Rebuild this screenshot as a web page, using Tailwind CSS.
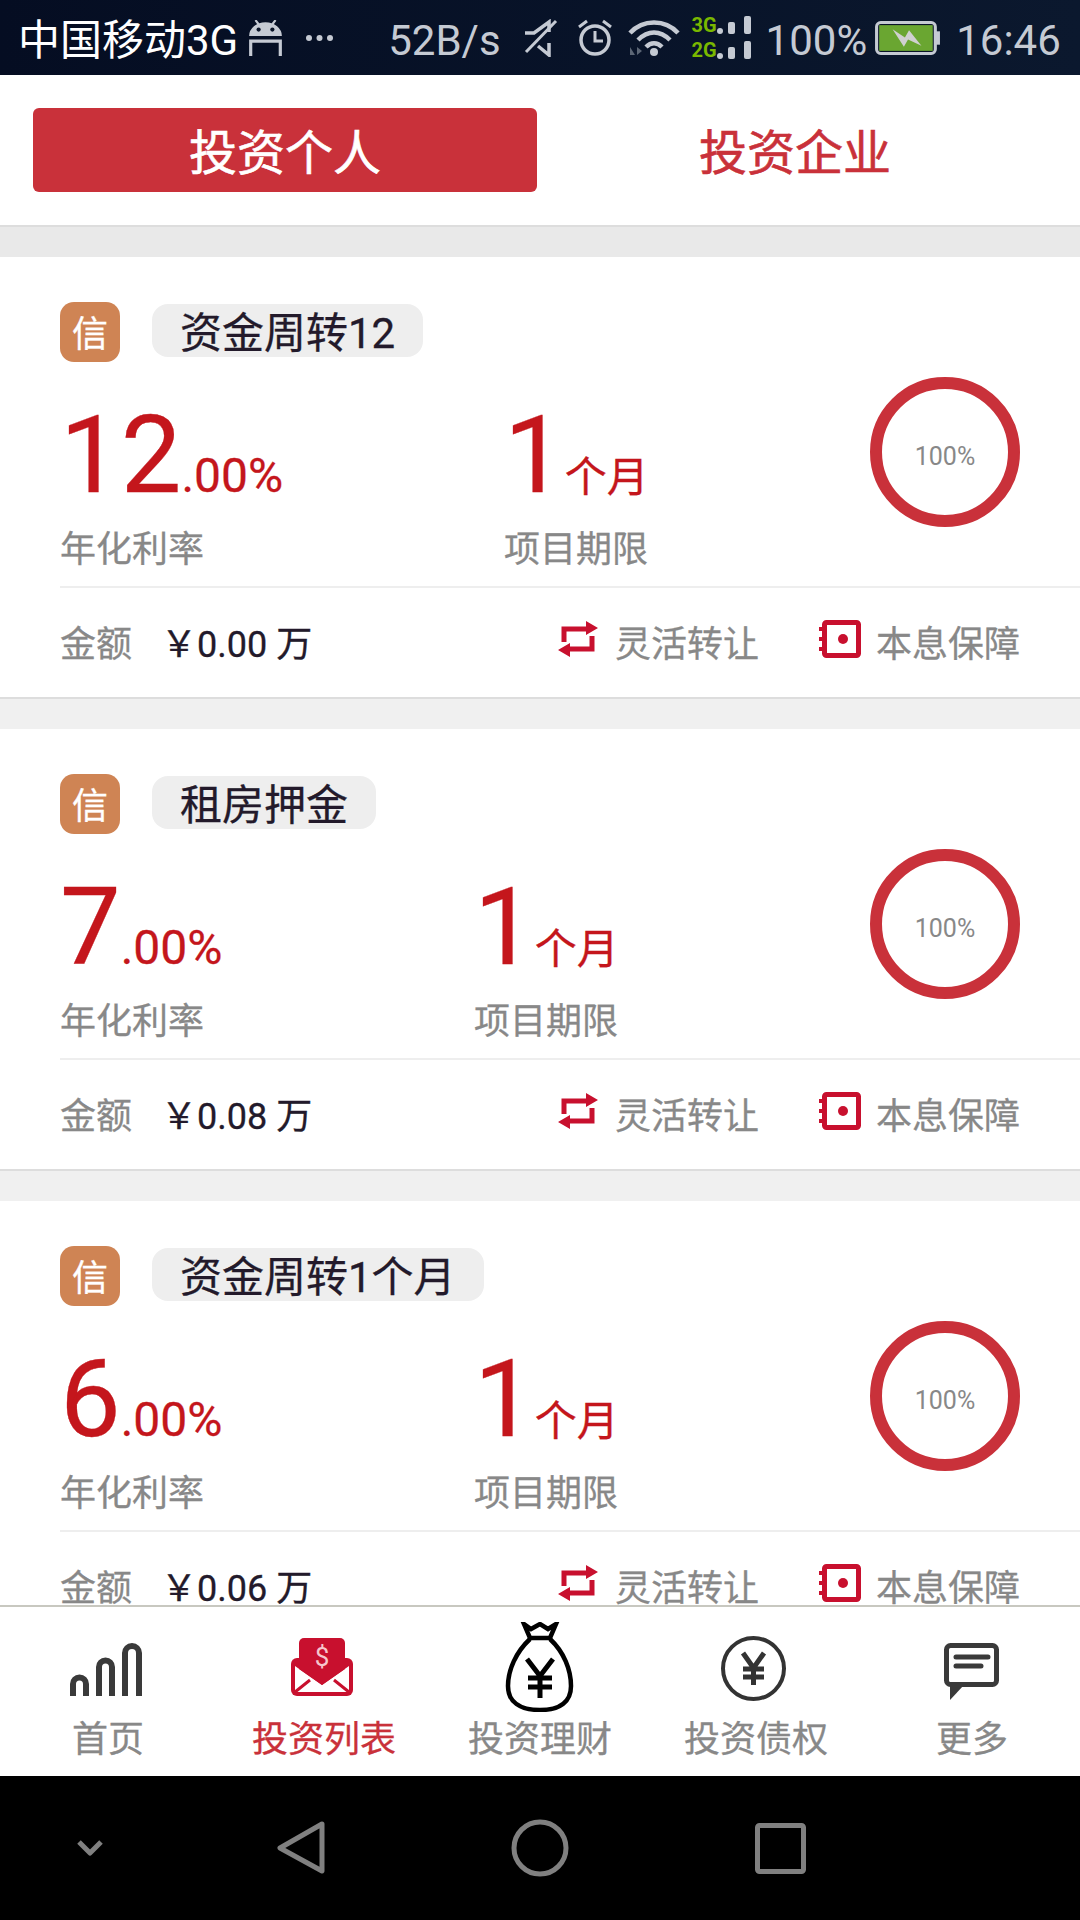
<!DOCTYPE html>
<html lang="zh-CN">
<head>
  <meta charset="UTF-8">
  <meta name="viewport" content="width=device-width, initial-scale=1.0">
  <title>投资列表</title>
  <script src="https://cdn.jsdelivr.net/npm/@tailwindcss/browser@4"></script>
</head>
<body class="bg-white font-['Roboto','Noto_Sans_CJK_SC',sans-serif]">
  <!-- shared card icons -->
  <svg class="hidden">
    <symbol id="icon-transfer" viewBox="0 0 40 38">
      <path d="M6 22V9H30M34 16V29H10" fill="none" stroke="#c8102e" stroke-width="5"/>
      <path d="M28 1L40 8L28 15ZM12 23L0 30L12 37Z" fill="#c8102e"/>
    </symbol>
    <symbol id="icon-safe" viewBox="0 0 42 38">
      <rect x="5.500" y="2.500" width="34" height="33" rx="2" fill="none" stroke="#c8102e" stroke-width="5"/>
      <circle cx="24" cy="19" r="5" fill="#c8102e"/>
      <path d="M0 9H8M0 19H8M0 29H8" stroke="#c8102e" stroke-width="4"/>
    </symbol>
  </svg>

  <div class="w-[1080px] h-[1920px] flex flex-col overflow-hidden">
    <!-- Status bar -->
    <div class="h-[75px] shrink-0 flex items-center pl-[18px] text-[42px] text-[#c5cad3] bg-linear-to-r from-[#050d22] to-[#0b182e]">
      <span class="text-white pt-[5px]">中国移动3G</span>
      <svg class="ml-[9px]" width="37" height="36" viewBox="0 0 35 34"><path d="M2 15a15.500 13 0 0 1 31 0Z" fill="#c5cad3"/><circle cx="11" cy="9" r="2" fill="#0a1428"/><circle cx="24" cy="9" r="2" fill="#0a1428"/><path d="M8 0l3 4M27 0l-3 4" stroke="#c5cad3" stroke-width="2"/><path d="M3.500 34V20H31.500V34" fill="none" stroke="#c5cad3" stroke-width="3"/></svg>
      <svg class="ml-[21px]" width="29" height="8" viewBox="0 0 29 8"><circle cx="4" cy="4" r="3" fill="#c5cad3"/><circle cx="14.500" cy="4" r="3" fill="#c5cad3"/><circle cx="25" cy="4" r="3" fill="#c5cad3"/></svg>
      <span class="ml-[54px] pt-[5px]">52B/s</span>
      <svg class="ml-[22px]" width="35" height="38" viewBox="0 0 35 38"><path d="M33 2L3 33" stroke="#c5cad3" stroke-width="3"/><path d="M2 14H11L26 3V13M26 24V36L15 27" fill="none" stroke="#c5cad3" stroke-width="3.500"/></svg>
      <svg class="ml-[20px]" width="34" height="38" viewBox="0 0 34 38"><circle cx="17" cy="21" r="14" fill="none" stroke="#c5cad3" stroke-width="3.500"/><path d="M17 12V22H25" fill="none" stroke="#c5cad3" stroke-width="3"/><path d="M1 8L9 2M33 8L25 2" stroke="#c5cad3" stroke-width="3"/></svg>
      <svg class="ml-[16px]" width="52" height="38" viewBox="0 0 52 38"><path d="M3 13C16 -1 38 -1 51 13M11 20C21 10 33 10 43 20M19 27C24 22 30 22 35 27" fill="none" stroke="#c5cad3" stroke-width="4.500" transform="translate(-1 1)"/><circle cx="26" cy="33" r="4" fill="#c5cad3"/><path d="M2 36V28L7 36ZM9 28V36L14 32Z" fill="#5c6675"/></svg>
      <div class="ml-[12px] w-[59px] h-[50px] flex flex-col text-[20px] leading-[25px] font-bold text-[#7ab800]">
        <div class="flex items-center justify-between">
          <span>3G</span>
          <svg class="shrink-0" width="35" height="20" viewBox="0 0 35 20"><circle cx="3" cy="16" r="3" fill="#c5cad3"/><rect x="11" y="7" width="7" height="12" rx="2" fill="#c5cad3"/><rect x="27" y="1" width="7" height="18" rx="2" fill="#c5cad3"/></svg>
        </div>
        <div class="flex items-center justify-between">
          <span>2G</span>
          <svg class="shrink-0" width="35" height="20" viewBox="0 0 35 20"><circle cx="3" cy="16" r="3" fill="#c5cad3"/><rect x="11" y="7" width="7" height="12" rx="2" fill="#c5cad3"/><rect x="27" y="1" width="7" height="18" rx="2" fill="#c5cad3"/></svg>
        </div>
      </div>
      <span class="ml-[15px] pt-[5px]">100%</span>
      <svg class="ml-[8px]" width="65" height="34" viewBox="0 0 63 33"><rect x="1.500" y="1.500" width="57" height="30" rx="4" fill="#0a1428" stroke="#c5cad3" stroke-width="3"/><rect x="4" y="4" width="52" height="25" fill="#6aa631"/><path d="M59 10h4v13h-4Z" fill="#c5cad3"/><path d="M17 8L29 16L33 9L45 24L32 18L28 25Z" fill="#d0d0d0"/></svg>
      <span class="ml-[16px] pt-[5px]">16:46</span>
    </div>

    <!-- Tabs -->
    <div class="h-[152px] shrink-0 flex bg-white border-b-2 border-[#dddddd] pl-[33px] pr-[27px] pt-[33px] text-[48px] [-webkit-text-stroke:0.6px]">
      <div class="w-[504px] h-[84px] flex items-center justify-center pt-[7px] rounded-[6px] bg-[#c9313a] text-white">投资个人</div>
      <div class="flex-1 h-[84px] flex items-center justify-center pt-[7px] text-[#c9313a]">投资企业</div>
    </div>

    <!-- Product list -->
    <div class="flex-1 min-h-0 overflow-hidden flex flex-col bg-[#f0f0f0] [-webkit-text-stroke:0.3px]">
      <div class="h-[30px] shrink-0 bg-[#e9e9e9]"></div>

      <!-- Card 1 -->
      <div class="shrink-0 h-[442px] mb-[30px] bg-white border-b-2 border-[#dddddd] pl-[60px] pt-[45px]">
        <div class="h-[60px] flex items-start">
          <div class="w-[60px] h-[60px] rounded-[14px] bg-[#cf8454] flex items-center justify-center pt-[6px] text-white text-[36px]">信</div>
          <div class="ml-[32px] mt-[2px] h-[53px] px-[28px] rounded-[16px] bg-[#eeeeee] flex items-center pt-[6px] text-[42px] text-[#231a2b]">资金周转12</div>
        </div>
        <div class="h-[224px] flex">
          <div class="w-[444px] pt-[39px]">
            <div class="flex items-baseline h-[108px] text-[#c4161c] leading-[108px]"><span class="text-[108px]">12</span><span class="text-[48px]">.00%</span></div>
            <div class="mt-[23px] text-[36px] leading-[36px] text-[#888888]">年化利率</div>
          </div>
          <div class="pt-[39px]">
            <div class="flex items-baseline h-[108px] text-[#c4161c] leading-[108px]"><span class="text-[108px]">1</span><span class="text-[42px]">个月</span></div>
            <div class="mt-[23px] text-[36px] leading-[36px] text-[#888888]">项目期限</div>
          </div>
          <div class="ml-auto mr-[60px] mt-[15px] w-[150px] h-[150px] rounded-full border-[12px] border-[#c9313a] flex items-center justify-center pt-[10px] text-[25px] text-[#888888] [-webkit-text-stroke:0px]">100%</div>
        </div>
        <div class="h-[111px] border-t-2 border-[#eeeeee] pr-[60px] pt-[4px] flex items-center text-[36px]">
          <span class="text-[#888888]">金额</span>
          <span class="ml-[29px] text-[#231a2b]">￥0.00 万</span>
          <svg class="ml-auto -mt-[12px]" width="40" height="38"><use href="#icon-transfer"/></svg>
          <span class="ml-[17px] text-[#888888]">灵活转让</span>
          <svg class="ml-[60px] -mt-[12px]" width="42" height="38"><use href="#icon-safe"/></svg>
          <span class="ml-[15px] text-[#888888]">本息保障</span>
        </div>
      </div>

      <!-- Card 2 -->
      <div class="shrink-0 h-[442px] mb-[30px] bg-white border-b-2 border-[#dddddd] pl-[60px] pt-[45px]">
        <div class="h-[60px] flex items-start">
          <div class="w-[60px] h-[60px] rounded-[14px] bg-[#cf8454] flex items-center justify-center pt-[6px] text-white text-[36px]">信</div>
          <div class="ml-[32px] mt-[2px] h-[53px] px-[28px] rounded-[16px] bg-[#eeeeee] flex items-center pt-[6px] text-[42px] text-[#231a2b]">租房押金</div>
        </div>
        <div class="h-[224px] flex">
          <div class="w-[414px] pt-[39px]">
            <div class="flex items-baseline h-[108px] text-[#c4161c] leading-[108px]"><span class="text-[108px]">7</span><span class="text-[48px]">.00%</span></div>
            <div class="mt-[23px] text-[36px] leading-[36px] text-[#888888]">年化利率</div>
          </div>
          <div class="pt-[39px]">
            <div class="flex items-baseline h-[108px] text-[#c4161c] leading-[108px]"><span class="text-[108px]">1</span><span class="text-[42px]">个月</span></div>
            <div class="mt-[23px] text-[36px] leading-[36px] text-[#888888]">项目期限</div>
          </div>
          <div class="ml-auto mr-[60px] mt-[15px] w-[150px] h-[150px] rounded-full border-[12px] border-[#c9313a] flex items-center justify-center pt-[10px] text-[25px] text-[#888888] [-webkit-text-stroke:0px]">100%</div>
        </div>
        <div class="h-[111px] border-t-2 border-[#eeeeee] pr-[60px] pt-[4px] flex items-center text-[36px]">
          <span class="text-[#888888]">金额</span>
          <span class="ml-[29px] text-[#231a2b]">￥0.08 万</span>
          <svg class="ml-auto -mt-[12px]" width="40" height="38"><use href="#icon-transfer"/></svg>
          <span class="ml-[17px] text-[#888888]">灵活转让</span>
          <svg class="ml-[60px] -mt-[12px]" width="42" height="38"><use href="#icon-safe"/></svg>
          <span class="ml-[15px] text-[#888888]">本息保障</span>
        </div>
      </div>

      <!-- Card 3, cut off by the bottom nav -->
      <div class="shrink-0 h-[442px] bg-white border-b-2 border-[#dddddd] pl-[60px] pt-[45px]">
        <div class="h-[60px] flex items-start">
          <div class="w-[60px] h-[60px] rounded-[14px] bg-[#cf8454] flex items-center justify-center pt-[6px] text-white text-[36px]">信</div>
          <div class="ml-[32px] mt-[2px] h-[53px] px-[28px] rounded-[16px] bg-[#eeeeee] flex items-center pt-[6px] text-[42px] text-[#231a2b]">资金周转1个月</div>
        </div>
        <div class="h-[224px] flex">
          <div class="w-[414px] pt-[39px]">
            <div class="flex items-baseline h-[108px] text-[#c4161c] leading-[108px]"><span class="text-[108px]">6</span><span class="text-[48px]">.00%</span></div>
            <div class="mt-[23px] text-[36px] leading-[36px] text-[#888888]">年化利率</div>
          </div>
          <div class="pt-[39px]">
            <div class="flex items-baseline h-[108px] text-[#c4161c] leading-[108px]"><span class="text-[108px]">1</span><span class="text-[42px]">个月</span></div>
            <div class="mt-[23px] text-[36px] leading-[36px] text-[#888888]">项目期限</div>
          </div>
          <div class="ml-auto mr-[60px] mt-[15px] w-[150px] h-[150px] rounded-full border-[12px] border-[#c9313a] flex items-center justify-center pt-[10px] text-[25px] text-[#888888] [-webkit-text-stroke:0px]">100%</div>
        </div>
        <div class="h-[111px] border-t-2 border-[#eeeeee] pr-[60px] pt-[4px] flex items-center text-[36px]">
          <span class="text-[#888888]">金额</span>
          <span class="ml-[29px] text-[#231a2b]">￥0.06 万</span>
          <svg class="ml-auto -mt-[12px]" width="40" height="38"><use href="#icon-transfer"/></svg>
          <span class="ml-[17px] text-[#888888]">灵活转让</span>
          <svg class="ml-[60px] -mt-[12px]" width="42" height="38"><use href="#icon-safe"/></svg>
          <span class="ml-[15px] text-[#888888]">本息保障</span>
        </div>
      </div>
    </div>

    <!-- Bottom nav -->
    <div class="h-[171px] shrink-0 grid grid-cols-5 bg-white border-t-2 border-[#c8c8c0] text-[36px] text-[#888888] [-webkit-text-stroke:0.3px]">
      <div class="flex flex-col items-center pt-[15px]">
        <svg width="108" height="90" viewBox="0 0 108 90" fill="none" stroke="#3a3a3a" stroke-width="6"><path d="M19 74V62a6.500 6.500 0 0 1 13 0V74M45 74V45a6.500 6.500 0 0 1 13 0V74M71 74V31a7 7 0 0 1 14 0V74"/></svg>
        <span class="mt-[6px] leading-[44px]">首页</span>
      </div>
      <div class="flex flex-col items-center pt-[15px] text-[#c9313a]">
        <svg width="108" height="90" viewBox="0 0 108 90">
          <rect x="21" y="36" width="62" height="38" rx="6" fill="#c8102e"/>
          <path d="M25 44L52 63L79 44V70H25Z" fill="#ffffff"/>
          <path d="M25 70L40 58M79 70L64 58" stroke="#c8102e" stroke-width="3"/>
          <path d="M34 16H70a5 5 0 0 1 5 5V47L52 63L29 47V21a5 5 0 0 1 5-5Z" fill="#c8102e"/>
          <text x="52" y="44" text-anchor="middle" font-size="26" fill="#f6c6cc" stroke="none">$</text>
        </svg>
        <span class="mt-[6px] leading-[44px]">投资列表</span>
      </div>
      <div class="flex flex-col items-center pt-[15px]">
        <svg width="108" height="90" viewBox="0 0 108 90" fill="none" stroke="#000000" stroke-width="4.500">
          <path d="M38 2L45 7L54 2L62 7L70 2L64 16H44Z"/>
          <path d="M44 17C30 30 22 48 22 64C22 80 34 88 54 88C74 88 85 80 85 64C85 48 78 30 64 17"/>
          <path d="M41 37L54 54L67 37M54 54V76M42 56H66M42 65H66" stroke-width="5"/>
        </svg>
        <span class="mt-[6px] leading-[44px]">投资理财</span>
      </div>
      <div class="flex flex-col items-center pt-[15px]">
        <svg width="108" height="90" viewBox="0 0 108 90" fill="none" stroke="#333333">
          <circle cx="51.500" cy="46.500" r="30.500" stroke-width="4"/>
          <path d="M41 31L51.500 46L62 31M51.500 46V63M41 47H62M41 55H62" stroke-width="5"/>
        </svg>
        <span class="mt-[6px] leading-[44px]">投资债权</span>
      </div>
      <div class="flex flex-col items-center pt-[15px]">
        <svg width="108" height="90" viewBox="0 0 108 90">
          <rect x="28.500" y="23.500" width="50" height="39" rx="4" fill="none" stroke="#3a3a3a" stroke-width="5"/>
          <path d="M38 35H70M38 44H63" stroke="#3a3a3a" stroke-width="5" stroke-linecap="round"/>
          <path d="M32 63V78L46 63Z" fill="#3a3a3a"/>
        </svg>
        <span class="mt-[6px] leading-[44px]">更多</span>
      </div>
    </div>

    <!-- Android system nav -->
    <div class="h-[144px] shrink-0 bg-black">
      <svg width="1080" height="144" viewBox="0 0 1080 144" fill="none" stroke="#808080" stroke-width="5" stroke-linejoin="round">
        <path d="M79 66L90 77L101 66"/>
        <path d="M322 48L280 72L322 95Z"/>
        <circle cx="540" cy="72" r="26"/>
        <rect x="757.500" y="49.500" width="46" height="46" rx="2"/>
      </svg>
    </div>
  </div>
</body>
</html>
